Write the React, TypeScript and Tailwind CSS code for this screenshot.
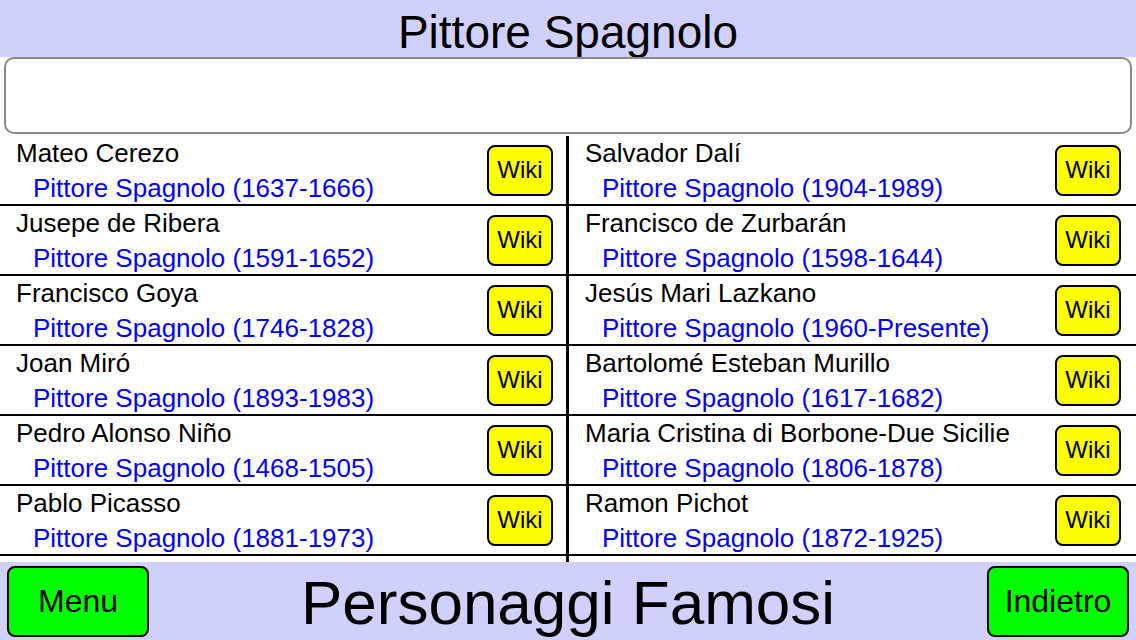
import React from "react";

const left = [
  ["Mateo Cerezo", "Pittore Spagnolo (1637-1666)"],
  ["Jusepe de Ribera", "Pittore Spagnolo (1591-1652)"],
  ["Francisco Goya", "Pittore Spagnolo (1746-1828)"],
  ["Joan Miró", "Pittore Spagnolo (1893-1983)"],
  ["Pedro Alonso Niño", "Pittore Spagnolo (1468-1505)"],
  ["Pablo Picasso", "Pittore Spagnolo (1881-1973)"],
];
const right = [
  ["Salvador Dalí", "Pittore Spagnolo (1904-1989)"],
  ["Francisco de Zurbarán", "Pittore Spagnolo (1598-1644)"],
  ["Jesús Mari Lazkano", "Pittore Spagnolo (1960-Presente)"],
  ["Bartolomé Esteban Murillo", "Pittore Spagnolo (1617-1682)"],
  ["Maria Cristina di Borbone-Due Sicilie", "Pittore Spagnolo (1806-1878)"],
  ["Ramon Pichot", "Pittore Spagnolo (1872-1925)"],
];

function Row({ name, sub, pr }: { name: string; sub: string; pr: string }) {
  return (
    <div className="flex h-[70px] items-center border-b-2 border-black">
      <div className="flex-1 min-w-0 pl-[16px] h-[68px] overflow-hidden">
        <div className="text-[26px] leading-[35px] h-[35px] text-black whitespace-nowrap">{name}</div>
        <div className="text-[26px] leading-[35px] h-[33px] pl-[17px] text-[#0000ff] whitespace-nowrap">{sub}</div>
      </div>
      <div
        className={`${pr} w-[66px] h-[51px] shrink-0 rounded-[8px] border-2 border-black bg-[#ffff00] flex items-center justify-center text-[24px] text-black`}
      >
        Wiki
      </div>
    </div>
  );
}

export default function App() {
  return (
    <div
      className="w-[1136px] h-[640px] bg-white flex flex-col overflow-hidden"
      style={{ fontFamily: '"Liberation Sans", Arial, sans-serif' }}
    >
      <div className="h-[57px] shrink-0 bg-[#d0d0fd] flex justify-center pt-[7px]">
        <div className="text-[46px] leading-[50px] text-black">Pittore Spagnolo</div>
      </div>
      <div className="h-[77px] shrink-0 mx-[4px] mb-[2px] rounded-[10px] border-2 border-[#888888] bg-white" />
      <div className="flex h-[426px] shrink-0">
        <div className="w-[566px] shrink-0">
          {left.map(([n, s]) => (
            <Row key={n} name={n} sub={s} pr="mr-[13px]" />
          ))}
        </div>
        <div className="w-[3px] shrink-0 bg-black" />
        <div className="flex-1 min-w-0">
          {right.map(([n, s]) => (
            <Row key={n} name={n} sub={s} pr="mr-[15px]" />
          ))}
        </div>
      </div>
      <div className="h-[78px] shrink-0 bg-[#d0d0fd] flex items-center justify-between px-[7px]">
        <div className="w-[142px] h-[71px] rounded-[8px] border-2 border-black bg-[#00ff00] flex items-center justify-center text-[32px] text-black">
          Menu
        </div>
        <div className="text-[62px] leading-[62px] text-black pt-[3px]">Personaggi Famosi</div>
        <div className="w-[142px] h-[71px] rounded-[8px] border-2 border-black bg-[#00ff00] flex items-center justify-center text-[32px] text-black">
          Indietro
        </div>
      </div>
    </div>
  );
}
